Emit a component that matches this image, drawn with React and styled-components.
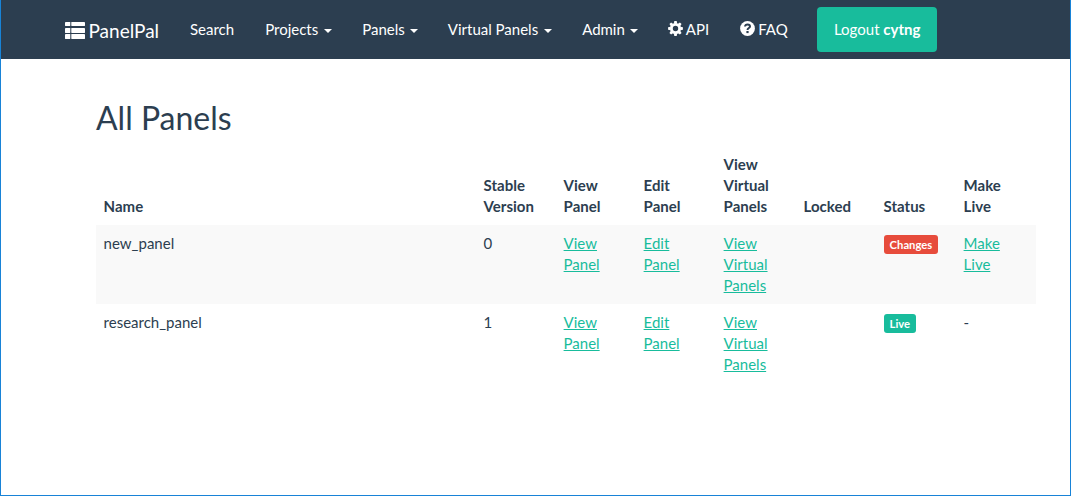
import React from 'react';
import styled, { createGlobalStyle } from 'styled-components';

const GlobalStyle = createGlobalStyle`
  *, *::before, *::after { box-sizing: border-box; }
  body { margin: 0; background: #fff; color: #2c3e50; font: 15px/21px Lato, sans-serif; overflow: hidden; }
`;
const Page = styled.div`
  height: 496px;
  border: 1px solid #1883d7;
  border-top: 0;
`;
const Navbar = styled.nav`
  display: flex;
  align-items: flex-start;
  height: 59px;
  padding-left: 64px;
  background: #2c3e50;
  color: #fff;
`;
const Brand = styled.a`
  display: flex;
  align-items: center;
  gap: 3.5px;
  width: 110px;
  height: 21px;
  margin-top: 20px;
  font-size: 19px;
  white-space: nowrap;
  svg { flex: none; margin-top: -1px; }
`;
const NavItem = styled.a`
  display: flex;
  align-items: center;
  gap: 3px;
  height: 21px;
  padding: 0 ${p => (p.$wide ? 16 : 15)}px 0 15px;
  margin-top: 19px;
  white-space: nowrap;
  svg { flex: none; margin-top: -2px; }
`;
const Caret = styled.span`
  margin-left: ${p => (p.$spaced ? 3 : 2)}px;
  margin-top: 2px;
  border-top: 4px solid;
  border-left: 4px solid transparent;
  border-right: 4px solid transparent;
`;
const Logout = styled.button`
  width: 120px;
  height: 45px;
  margin: 7px 0 0 14px;
  padding: 0 0 0 1px;
  border: 0;
  border-radius: 4px;
  background: #18bc9c;
  color: #fff;
  font: inherit;
`;
const Content = styled.main`
  width: 940px;
  margin: 41px 0 0 95px;
`;
const Title = styled.h1`
  margin: 0 0 10px;
  font-size: 32px;
  line-height: 36px;
  font-weight: 400;
`;
const Table = styled.table`
  width: 100%;
  border-collapse: collapse;
  table-layout: fixed;
`;
const Head = styled.th`
  width: ${p => p.$w}px;
  padding: 8px 8px 8px 7.6px;
  text-align: left;
  vertical-align: bottom;
  font-weight: 700;
`;
const Row = styled.tr`
  background: ${p => (p.$striped ? '#f9f9f9' : '#fff')};
`;
const Cell = styled.td`
  height: 79px;
  padding: 8px 8px 8px 7.6px;
  vertical-align: top;
`;
const Link = styled.a`
  color: #18bc9c;
  text-decoration: underline;
`;
const Label = styled.span`
  display: block;
  width: fit-content;
  height: 19px;
  margin-top: 2px;
  padding: 0 6px;
  border-radius: 3px;
  background: ${p => p.$color};
  color: #fff;
  font-size: 11.25px;
  font-weight: 700;
  line-height: 19px;
`;

const ListIcon = () => (
  <svg width="20" height="18" viewBox="0 0 20 18" fill="currentColor">
    {[[1, 4], [7, 5], [13, 5]].map(([y, h]) => (
      <g key={y}>
        <rect x="0" y={y} width="5.3" height={h} rx="0.4" />
        <rect x="6.3" y={y} width="13.7" height={h} rx="0.4" />
      </g>
    ))}
  </svg>
);

const CogIcon = () => (
  <svg width="15" height="15" viewBox="-7.5 -7.5 15 15" fill="currentColor">
    <circle r="4.1" fill="none" stroke="currentColor" strokeWidth="2.8" />
    {[0, 45, 90, 135, 180, 225, 270, 315].map(a => (
      <path key={a} d="M-1.7 -4.8L-1.2 -7.4H1.2L1.7 -4.8Z" transform={`rotate(${a})`} />
    ))}
  </svg>
);

const HelpIcon = () => (
  <svg width="15" height="15" viewBox="0 0 15 15" fill="none">
    <circle cx="7.5" cy="7.5" r="7.4" fill="currentColor" />
    <path d="M5 5.5C5.2 3.9 6.2 3.4 7.5 3.4C9 3.4 10 4.2 10 5.4C10 7.1 7.5 6.9 7.5 9" stroke="#2c3e50" strokeWidth="2" />
    <rect x="6.4" y="10" width="2.2" height="2.1" fill="#2c3e50" />
  </svg>
);

const columns = [
  ['Name', 380], ['Stable Version', 80], ['View Panel', 80], ['Edit Panel', 80],
  ['View Virtual Panels', 80], ['Locked', 80], ['Status', 80], ['Make Live', 80],
];
const panels = [
  { name: 'new_panel', version: 0, status: 'Changes', color: '#e74c3c', pending: true },
  { name: 'research_panel', version: 1, status: 'Live', color: '#18bc9c', pending: false },
];

export default function App() {
  return (
    <Page>
      <GlobalStyle />
      <Navbar>
        <Brand><ListIcon />PanelPal</Brand>
        <NavItem $wide>Search</NavItem>
        <NavItem>Projects<Caret $spaced /></NavItem>
        <NavItem>Panels<Caret /></NavItem>
        <NavItem>Virtual Panels<Caret $spaced /></NavItem>
        <NavItem>Admin<Caret /></NavItem>
        <NavItem $wide><CogIcon />API</NavItem>
        <NavItem><HelpIcon />FAQ</NavItem>
        <Logout>Logout <b>cytng</b></Logout>
      </Navbar>
      <Content>
        <Title>All Panels</Title>
        <Table>
          <thead><tr>{columns.map(([t, w]) => <Head key={t} $w={w}>{t}</Head>)}</tr></thead>
          <tbody>
            {panels.map((p, i) => (
              <Row key={p.name} $striped={i % 2 === 0}>
                <Cell>{p.name}</Cell>
                <Cell>{p.version}</Cell>
                <Cell><Link>View Panel</Link></Cell>
                <Cell><Link>Edit Panel</Link></Cell>
                <Cell><Link>View Virtual Panels</Link></Cell>
                <Cell />
                <Cell><Label $color={p.color}>{p.status}</Label></Cell>
                <Cell>{p.pending ? <Link>Make Live</Link> : '-'}</Cell>
              </Row>
            ))}
          </tbody>
        </Table>
      </Content>
    </Page>
  );
}
